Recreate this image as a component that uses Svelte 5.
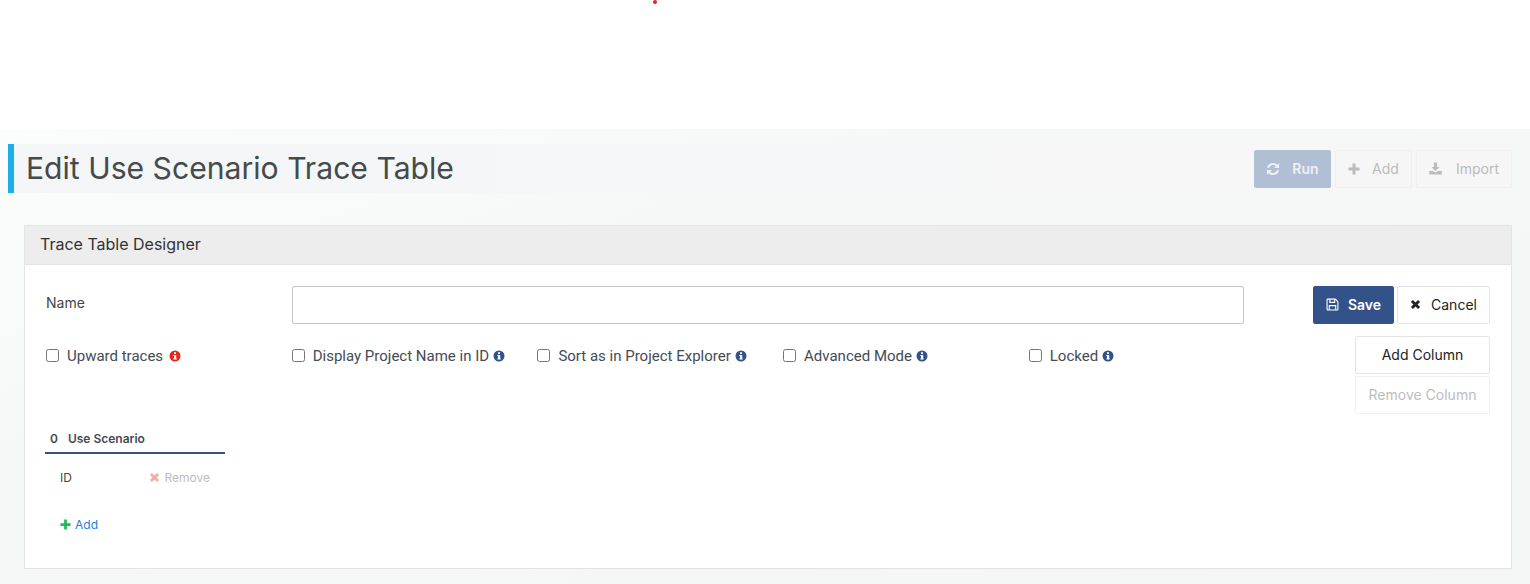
<script>
  const options = [
    { label: 'Upward traces', tone: 'red' },
    { label: 'Display Project Name in ID', tone: 'blue' },
    { label: 'Sort as in Project Explorer', tone: 'blue' },
    { label: 'Advanced Mode', tone: 'blue' },
    { label: 'Locked', tone: 'blue' }
  ]
</script>

{#snippet info(tone)}
  <svg class="info {tone}" viewBox="0 0 12 12" aria-hidden="true">
    <path fill-rule="evenodd" d="M6 .5a5.500 5.500 0 1 0 0 11A5.500 5.500 0 0 0 6 .5zM5 2.300h2v1.700H5zM4.300 5h2.900v3.400h.6v1.200H4.300V8.400H5V6.100h-.7z" />
  </svg>
{/snippet}

{#snippet cross()}
  <path d="M3.200 1 6 3.800 8.800 1 11 3.200 8.200 6 11 8.800 8.800 11 6 8.200 3.200 11 1 8.800 3.800 6 1 3.200z" />
{/snippet}

{#snippet plus()}
  <path d="M4.500.5h3v4h4v3h-4v4h-3v-4h-4v-3h4z" />
{/snippet}

<div class="top">
  <span class="dot"></span>
</div>

<main class="page">
  <header class="title-bar">
    <h1>Edit Use Scenario Trace Table</h1>
    <div class="actions">
      <button class="btn primary faded" disabled>
        <svg class="icon refresh" viewBox="0 0 12 12" aria-hidden="true">
          <path d="M11.200.9v4.300H6.900l1.600-1.600A3.500 3.500 0 0 0 2.700 5H.8a5.400 5.400 0 0 1 9-2.700zM.8 11.100V6.800h4.300L3.500 8.400A3.500 3.500 0 0 0 9.300 7h1.900a5.400 5.400 0 0 1-9 2.700z" />
        </svg>
        Run
      </button>
      <button class="btn ghost add" disabled>
        <svg class="icon" viewBox="0 0 12 12" aria-hidden="true">{@render plus()}</svg>
        Add
      </button>
      <button class="btn ghost import" disabled>
        <svg class="icon" viewBox="0 0 12 12" aria-hidden="true">
          <path d="M4.500.5h3v4h2.300L6 8.300 2.200 4.500h2.300zM.2 8.300h3.300L6 9.700l2.500-1.400h3.300v3.200H.2z" />
        </svg>
        Import
      </button>
    </div>
  </header>

  <section class="card">
    <div class="card-head">Trace Table Designer</div>
    <div class="card-body">
      <div class="name-row">
        <label class="name-label" for="name">Name</label>
        <input id="name" type="text" />
        <div class="form-actions">
          <button class="btn primary">
            <svg class="icon save" viewBox="0 0 12 12" aria-hidden="true">
              <path fill-rule="evenodd" d="M1.500.5h7.300l2.700 2.700v7.300a1 1 0 0 1-1 1h-9a1 1 0 0 1-1-1v-9a1 1 0 0 1 1-1zM1.500 1.500v9h1V6.500h7v4h1V3.600L8.500 1.600v2.900h-5.500V1.500zM4 1.500v2h3.500v-2zM3.500 7.500v3h5v-3z" />
            </svg>
            Save
          </button>
          <button class="btn plain">
            <svg class="icon" viewBox="0 0 12 12" aria-hidden="true">{@render cross()}</svg>
            Cancel
          </button>
        </div>
      </div>

      <div class="options-row">
        <div class="options">
          {#each options as option}
            <label class="check">
              <input type="checkbox" />
              <span>{option.label}</span>
              {@render info(option.tone)}
            </label>
          {/each}
        </div>
        <div class="column-actions">
          <button class="btn plain wide">Add Column</button>
          <button class="btn plain wide off" disabled>Remove Column</button>
        </div>
      </div>

      <div class="trace-column">
        <div class="column-head"><span class="index">0</span>Use Scenario</div>
        <div class="field">
          <span>ID</span>
          <span class="remove">
            <svg viewBox="0 0 12 12" aria-hidden="true">{@render cross()}</svg>
            Remove
          </span>
        </div>
        <a class="add-link" href="#add">
          <svg viewBox="0 0 12 12" aria-hidden="true">{@render plus()}</svg>
          Add
        </a>
      </div>
    </div>
  </section>
</main>

<style>
  :global(body) {
    margin: 0;
    background: #f5f6f6;
  }

  .top {
    position: relative;
    height: 129px;
    background: #fff;
  }

  .dot {
    position: absolute;
    top: 0;
    left: 653px;
    width: 4px;
    height: 4px;
    border-radius: 50%;
    background: #e0202a;
  }

  .page {
    height: 455px;
    padding: 15px 18px 0 8px;
    box-sizing: border-box;
    overflow: hidden;
    font-family: Inter, sans-serif;
    color: #333;
    background: linear-gradient(160deg, #fbfcfc 0%, #f6f7f7 35%, #f4f5f5 100%);
  }

  .title-bar {
    display: flex;
    align-items: center;
    justify-content: space-between;
    height: 49px;
    border-left: 6px solid #1caeea;
    background: linear-gradient(90deg, #f3f5f7 0%, #f6f7f8 60%, #f6f6f6 100%);
  }

  h1 {
    margin: 0 0 0 12px;
    font-size: 30.150px;
    font-weight: 400;
    line-height: 49px;
    color: #454a4a;
  }

  .actions {
    display: flex;
    gap: 4px;
  }

  .actions .btn {
    padding-bottom: 0;
  }

  .btn {
    display: inline-flex;
    align-items: center;
    justify-content: center;
    height: 38px;
    padding: 0 0 2px;
    box-sizing: border-box;
    border: 1px solid #e4e4e4;
    border-radius: 2px;
    font: 400 14px Inter, sans-serif;
    background: #fff;
    color: #222;
  }

  .icon {
    width: 12px;
    height: 12px;
    margin-right: 9px;
    fill: currentColor;
  }

  .primary {
    border-color: #34528a;
    background: #34528a;
    color: #fff;
    font-weight: 600;
  }

  .faded {
    width: 77px;
    border-color: #b0bfd3;
    background: #b0bfd3;
    color: #eef1f5;
  }

  .faded .icon {
    width: 14px;
    height: 14px;
    margin-right: 12px;
  }

  .ghost {
    border-color: #efefef;
    background: #f6f6f6;
    color: #bcbcbc;
    font-weight: 400;
  }

  .ghost .icon {
    width: 13px;
    height: 13px;
    margin-right: 14px;
  }

  .add {
    width: 77px;
  }

  .actions .add .icon {
    width: 12px;
    height: 12px;
    margin-right: 12px;
  }

  .import {
    width: 96px;
  }

  .card {
    margin: 32px 0 0 16px;
    height: 344px;
    box-sizing: border-box;
    border: 1px solid #e4e4e4;
    background: #fff;
  }

  .card-head {
    height: 39px;
    box-sizing: border-box;
    padding-left: 15px;
    border-bottom: 1px solid #e4e4e4;
    background: #ededed;
    font-size: 16px;
    font-weight: 400;
    line-height: 37px;
    color: #333;
  }

  .card-body {
    padding: 21px 21px 0;
  }

  .name-row {
    display: flex;
    align-items: flex-start;
  }

  .name-label {
    flex: 0 0 246px;
    padding-top: 8px;
    font-size: 14px;
    line-height: 17px;
    color: #444;
  }

  #name {
    flex: 0 0 952px;
    height: 38px;
    box-sizing: border-box;
    border: 1px solid #c4c4c4;
    border-radius: 2px;
    background: #fff;
  }

  .form-actions {
    display: flex;
    flex: 1;
    justify-content: flex-end;
    gap: 3px;
  }

  .form-actions .primary {
    width: 81px;
  }

  .form-actions .plain {
    width: 93px;
  }

  .form-actions .save {
    width: 13px;
    height: 13px;
  }

  .form-actions .plain .icon {
    width: 11px;
    height: 11px;
    margin-right: 10px;
  }

  .options-row {
    display: flex;
    justify-content: space-between;
    align-items: flex-start;
    margin-top: 12px;
  }

  .options {
    display: grid;
    grid-template-columns: repeat(5, 245.700px);
    padding-top: 11px;
  }

  .check {
    display: flex;
    align-items: center;
    height: 17px;
    font-family: Roboto, sans-serif;
    font-size: 15px;
    color: #444b55;
  }

  .check input {
    width: 13px;
    height: 13px;
    margin: 0 8px 0 0;
  }

  .info {
    width: 12px;
    height: 12px;
    margin-left: 4px;
  }

  .info.red {
    margin-left: 6px;
    fill: #e8261c;
  }

  .info.blue {
    fill: #34528a;
  }

  .column-actions {
    display: flex;
    flex-direction: column;
    gap: 2px;
  }

  .wide {
    width: 135px;
  }

  .off {
    border-color: #f0f0f0;
    color: #bdbdbd;
    font-weight: 400;
  }

  .trace-column {
    width: 180px;
    margin: 8px 0 0 -1px;
    font-size: 12px;
  }

  .column-head {
    height: 30px;
    padding-left: 5px;
    border-bottom: 2px solid #34528a;
    font-size: 12px;
    font-weight: 600;
    line-height: 33px;
    color: #444b55;
  }

  .index {
    margin-right: 10px;
  }

  .field {
    display: flex;
    justify-content: space-between;
    align-items: center;
    padding: 16px 15px 0;
    line-height: 15px;
    color: #444;
  }

  .remove {
    display: flex;
    align-items: center;
    color: #bdbdbd;
  }

  .remove svg {
    width: 11px;
    height: 11px;
    margin-right: 4px;
    fill: #f5aaa8;
  }

  .add-link {
    display: inline-flex;
    align-items: center;
    margin: 32px 0 0 15px;
    color: #1a7fd6;
    line-height: 15px;
    text-decoration: none;
  }

  .add-link svg {
    width: 11px;
    height: 11px;
    margin-right: 4px;
    fill: #1fbb55;
  }
</style>
